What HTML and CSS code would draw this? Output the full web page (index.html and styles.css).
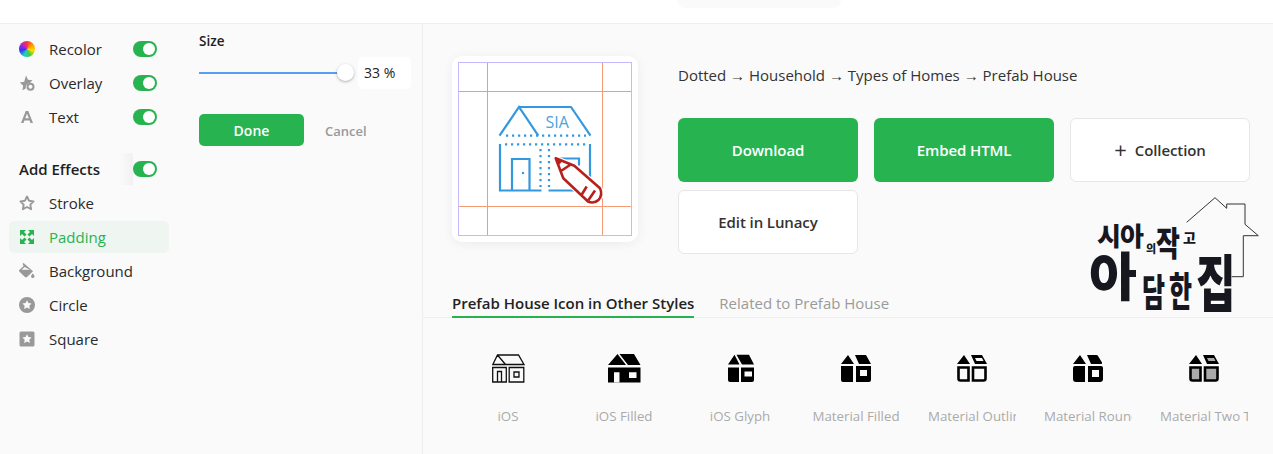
FILE: index.html
```html
<!DOCTYPE html>
<html lang="en">
<head>
<meta charset="utf-8">
<title>Prefab House Icon</title>
<link rel="stylesheet" href="styles.css">
</head>
<body>
<header class="topbar"><div class="pill"></div></header>
<main class="main">
  <aside class="editor">
    <nav class="menu">
      <div class="row"><span class="ico wheel"></span><span class="lbl">Recolor</span><span class="toggle"></span></div>
      <div class="row"><svg class="ico" viewBox="0 0 16 16"><path class="g" d="M7 .5l2 4.200 4.500.6-2.700 2.700a4.500 4.500 0 0 0-4 5.400l-3.400 1.800.8-4.500L.8 7.500l4.400-.7z"/><circle cx="11.500" cy="11.800" r="3" class="ring"/></svg><span class="lbl">Overlay</span><span class="toggle"></span></div>
      <div class="row"><svg class="ico" viewBox="0 0 16 16"><path class="g" d="M6.700 2h2.600L14 14h-2.500l-.9-2.500H5.400L4.500 14H2zM6.200 9.300h3.600L8 4.800z"/></svg><span class="lbl">Text</span><span class="toggle"></span></div>
      <div class="row head-row"><span class="lbl strong">Add Effects</span><span class="toggle fade"></span></div>
      <div class="row"><svg class="ico" viewBox="0 0 16 16"><path class="line" d="M8 1.500l2 4.200 4.600.7-3.300 3.200.8 4.600L8 12l-4.100 2.200.8-4.600L1.400 6.400 6 5.700z"/></svg><span class="lbl">Stroke</span></div>
      <div class="row active"><svg class="ico" viewBox="0 0 16 16"><g class="pad"><path d="M1 1h6L5 3l2.500 2.500-2 2L3 5 1 7z"/><path d="M15 1H9l2 2-2.500 2.500 2 2L13 5l2 2z"/><path d="M1 15H7L5 13l2.500-2.500-2-2L3 11l-2-2z"/><path d="M15 15H9l2-2-2.500-2.500 2-2L13 11l2-2z"/></g></svg><span class="lbl">Padding</span></div>
      <div class="row"><svg class="ico" viewBox="0 0 16 16"><path class="g" d="M3.500.8l1.100-.8 9.400 8.300-6 5.700a1.500 1.500 0 0 1-2 0L.5 8.700a1.400 1.400 0 0 1 0-2L4.600 3zM5.600 4L2.600 6.800h8.400z"/><path class="g" d="M13.800 10.500c1 1.300 1.700 2 1.700 2.900a1.700 1.700 0 0 1-3.400 0c0-.9.700-1.600 1.700-2.900z"/></svg><span class="lbl">Background</span></div>
      <div class="row"><svg class="ico" viewBox="0 0 16 16"><path class="g" fill-rule="evenodd" d="M8 0a8 8 0 1 1 0 16A8 8 0 0 1 8 0zM8 3.200L6.600 6.100l-3.200.4 2.300 2.200-.6 3.200L8 10.400l2.900 1.500-.6-3.200 2.300-2.200-3.200-.4z"/></svg><span class="lbl">Circle</span></div>
      <div class="row"><svg class="ico" viewBox="0 0 16 16"><path class="g" fill-rule="evenodd" d="M2 .5h12A1.500 1.500 0 0 1 15.500 2v12a1.500 1.500 0 0 1-1.500 1.500H2A1.500 1.500 0 0 1 .5 14V2A1.500 1.500 0 0 1 2 .5zM8 3.200L6.600 6.100l-3.200.4 2.300 2.200-.6 3.200L8 10.400l2.900 1.500-.6-3.200 2.300-2.200-3.200-.4z"/></svg><span class="lbl">Square</span></div>
    </nav>
    <section class="size">
      <div class="size-title">Size</div>
      <div class="slider-row">
        <div class="slider"><span class="thumb"></span></div>
        <div class="value">33 %</div>
      </div>
      <div class="actions">
        <button class="done">Done</button>
        <button class="cancel">Cancel</button>
      </div>
    </section>
  </aside>
  <section class="content">
    <div class="hero">
      <div class="card">
        <svg class="preview" viewBox="12 11 186 186">
          <rect class="guide-p" x="18.500" y="17.500" width="173" height="173"/>
          <path class="guide-o" d="M47.500 18v172M162.500 18v172M19 46.500h172M19 161.500h172"/>
          <path class="hs" d="M59.500 90.700L79 62l19.300 28.700M79 62h52l19.500 28.700M60 99v46.500h41.500M150 99v40M108.500 145.500H135M72 145V114h17.500v31M120 113.500h19v7"/>
          <path class="dots" d="M66 90.700h80M65 99.300h84M100.500 104v38M109 104v38"/>
          <circle class="dot" cx="83" cy="128" r="1.200"/>
          <text class="sia" x="105.500" y="83">SIA</text>
          <path class="halo" d="M115.700 113.300L134.300 120.700 160 143.300Q163 150 158.500 155 154 159 148 156.500L123.300 133.300z"/>
          <path class="pen" d="M115.700 113.300L134.300 120.700 160 143.300Q163 150 158.500 155 154 159 148 156.500L123.300 133.300zM146.700 141.500L141.500 150M155 145.500L148.500 155M121.700 125.500L130 120"/>
          <path class="pen-tip" d="M115.700 113.300L122.500 116 118.500 120.500z"/>
        </svg>
      </div>
      <div class="info">
        <div class="crumbs">Dotted → Household → Types of Homes → Prefab House</div>
        <div class="btns">
          <button class="btn green">Download</button>
          <button class="btn green">Embed HTML</button>
          <button class="btn plain"><span class="plus">+</span>Collection</button>
          <button class="btn plain">Edit in Lunacy</button>
        </div>
      </div>
    </div>
    <div class="tabs">
      <span class="tab on">Prefab House Icon in Other Styles</span>
      <span class="tab">Related to Prefab House</span>
    </div>
    <div class="styles">
      <div class="style">
        <svg class="sico" viewBox="0 0 33 29"><path class="o" d="M5.500 1h21l5.500 9.500H.8zM5.500 1l8 9.500M.7 13.500h13.600V28H.7zM5.500 28V17.500h4V28M17.200 13.500h14.600V28H17.200zM22 18h5v5h-5z"/></svg>
        <div class="cap">iOS</div>
      </div>
      <div class="style">
        <svg class="sico" viewBox="0 0 33 29"><path d="M9.500 0l8.500 11H0zM11.500 0H26l6.500 11H20zM0 13.500h32.500V28.500h-32.500z"/><path class="cut" d="M6 18.300h5.500v10.200H6zM21 18.300h7.500v5.700H21z"/></svg>
        <div class="cap">iOS Filled</div>
      </div>
      <div class="style">
        <svg class="sico" viewBox="0 0 33 29"><path d="M10.500.7l5 9.800H4zM12.500.7H25l5 9.800H18zM4 13.500h11V28H6a2 2 0 0 1-2-2zM17 13.500h13V26a2 2 0 0 1-2 2H17z"/><path class="cut" d="M20.500 17.500h7.500v5h-7.500z"/></svg>
        <div class="cap">iOS Glyph</div>
      </div>
      <div class="style">
        <svg class="mico" viewBox="0 0 30 27"><path d="M7 0l6 9H0zM14 0h11l5 9H18zM0 11h12v16H2a2 2 0 0 1-2-2zM15 11h15v14a2 2 0 0 1-2 2H15z"/><path class="cut" d="M19 15h7v6h-7z"/></svg>
        <div class="cap">Material Filled</div>
      </div>
      <div class="style">
        <svg class="mico" viewBox="0 0 30 27"><path d="M7 0l6 9H0zM14 0h11l5 9H18z"/><path class="cut" d="M18 3h7l1.500 3h-7z"/><path class="o2" d="M1.500 12.500h10V25.500H3.500a2 2 0 0 1-2-2zM16 12.500h12.500V23.500a2 2 0 0 1-2 2H16z"/></svg>
        <div class="cap">Material Outline</div>
      </div>
      <div class="style">
        <svg class="mico" viewBox="0 0 30 27"><path d="M7 0l6 9H0zM14 0h9.500a2 2 0 0 1 1.500 1l4 6.500q.5 1.500-1 1.500H18zM2 11h10v16H3a3 3 0 0 1-3-3v-11a2 2 0 0 1 2-2zM15 11h13a2 2 0 0 1 2 2v11a3 3 0 0 1-3 3H15z"/><path class="cut" d="M19 15h7v7h-7z"/></svg>
        <div class="cap">Material Round</div>
      </div>
      <div class="style">
        <svg class="mico" viewBox="0 0 30 27"><path d="M7 0l6 9H0zM14 0h11l5 9H18z"/><path class="grey" d="M18 3h7l1.500 3h-7zM1.500 12.500h10V25.500H3.500a2 2 0 0 1-2-2zM16 12.500h12.500V23.500a2 2 0 0 1-2 2H16z"/><path class="o2" d="M1.500 12.500h10V25.500H3.500a2 2 0 0 1-2-2zM16 12.500h12.500V23.500a2 2 0 0 1-2 2H16z"/></svg>
        <div class="cap">Material Two Tone</div>
      </div>
    </div>
  </section>
</main>
<div class="logo">
  <svg class="logo-house" viewBox="0 0 203 140"><path d="M116.700 37.300L145 12.700l11.700 10.600V19H175v20.300l13.300 11.400h-15v41h-11.600"/></svg>
  <span class="lg w1">시아</span>
  <span class="lg w2">의</span>
  <span class="lg w3">작</span>
  <span class="lg w4">고</span>
  <span class="lg w5">아</span>
  <span class="lg w6">담</span>
  <span class="lg w7">한</span>
  <span class="lg w8">집</span>
</div>
</body>
</html>
```
FILE: styles.css
```css
* { box-sizing: border-box; }
html, body { margin: 0; height: 100%; }
body {
  height: 454px;
  overflow: hidden;
  background: #fff;
  color: #2b2b2b;
  font-family: "Open Sans", "Liberation Sans", sans-serif;
  font-size: 14px;
  position: relative;
}
.topbar { height: 24px; background: #fff; border-bottom: 1px solid #eeeeee; position: relative; }
.pill { width: 164px; height: 8px; margin-left: 677px; background: #fafafa; border-radius: 0 0 9px 9px; }
.main { display: flex; height: 430px; padding-left: 2px; background: #fafafa; }
.editor { width: 421px; flex: none; display: flex; border-right: 1px solid #eeeeee; }
.menu { width: 197px; flex: none; padding: 9px 0 0 7px; display: flex; flex-direction: column; gap: 2px; }
.row { width: 160px; height: 32px; display: flex; align-items: center; padding-left: 10px; border-radius: 5px; position: relative; flex: none; }
.head-row { margin-top: 18px; }
.active { background: #eff5f1; color: #28b351; }
.ico { width: 16px; height: 16px; flex: none; margin-right: 14px; display: block; }
.wheel { border-radius: 50%; background: conic-gradient(#f33, #f90, #fd0, #4c4, #2cc, #33e, #a2d, #f33); }
.g { fill: #999; }
.line { fill: none; stroke: #999; stroke-width: 1.900; stroke-linejoin: round; }
.ring { fill: #fafafa; stroke: #999; stroke-width: 2; }
.pad { fill: #28b351; }
.lbl { font-size: 15px; line-height: 20px; height: 20px; }
.strong { font-weight: 600; color: #1f1f1f; }
.toggle { position: absolute; left: 124px; top: 8px; width: 24px; height: 16px; border-radius: 8px; background: #28b351; }
.toggle::after { content: ""; position: absolute; right: 2px; top: 2px; width: 12px; height: 12px; border-radius: 50%; background: #fff; }
.fade::before { content: ""; position: absolute; left: -13px; top: -8px; width: 13px; height: 32px; background: linear-gradient(to right, #fafafa, #f1f1f1); }
.size { flex: 1; padding-top: 8px; padding-right: 10px; }
.size-title { font-size: 13.500px; font-weight: 600; line-height: 18px; color: #222; }
.slider-row { display: flex; align-items: center; margin-top: 7px; height: 32px; }
.slider { width: 147px; height: 2px; background: #5b9df5; position: relative; margin-right: 12px; }
.thumb { position: absolute; right: -8px; top: -8px; width: 17px; height: 17px; border-radius: 50%; background: #fff; box-shadow: 0 1px 3px rgba(0,0,0,.3); }
.value { width: 53px; height: 32px; background: #fff; border-radius: 5px; padding-left: 6px; line-height: 32px; font-size: 14px; color: #222; }
.actions { display: flex; align-items: center; margin-top: 25px; }
.done { width: 105px; height: 32px; border: 0; padding: 1px 0 0; border-radius: 5px; background: #28b351; color: #fff; font: 600 14px "Open Sans", sans-serif; }
.cancel { border: 0; background: none; padding: 2px 0 0; margin-left: 21px; color: #999; font: 600 13px "Open Sans", sans-serif; }
.content { flex: 1; min-width: 0; }
.hero { display: flex; padding: 32px 0 0 29px; height: 270px; }
.card { width: 186px; height: 186px; border-radius: 10px; background: #fff; box-shadow: 0 2px 12px rgba(0,0,0,.06); flex: none; }
.preview { display: block; width: 186px; height: 186px; }
.guide-p { fill: none; stroke: #c4b9ff; stroke-width: 1; }
.guide-o { fill: none; stroke: #f59a73; stroke-width: 1; }
.hs { fill: none; stroke: #3498df; stroke-width: 2.200; }
.dots { fill: none; stroke: #3498df; stroke-width: 2.200; stroke-dasharray: 2.200 3.800; }
.dot { fill: #3498df; }
.sia { fill: #4ba3e0; font-size: 16px; font-family: "Open Sans", sans-serif; }
.halo { fill: #fff; stroke: #fff; stroke-width: 5; }
.pen { fill: none; stroke: #b8201e; stroke-width: 2.600; stroke-linejoin: round; }
.pen-tip { fill: #b8201e; }
.info { margin-left: 40px; width: 590px; flex: none; }
.crumbs { margin-top: 8px; line-height: 22px; font-size: 15px; font-weight: 500; color: #333; }
.btns { display: flex; flex-wrap: wrap; gap: 8px 16px; margin-top: 32px; }
.btn { height: 64px; width: 180px; border-radius: 6px; font: 600 15px "Open Sans", sans-serif; letter-spacing: -.1px; }
.green { background: #28b351; border: 0; color: #fff; }
.plain { background: #fff; border: 1px solid #e6e6e6; color: #333; }
.plus { font-size: 22px; font-weight: 400; margin-right: 8px; line-height: 14px; vertical-align: -2px; }
.tabs { height: 24px; display: flex; gap: 25px; padding-left: 29px; border-bottom: 1px solid #eeeeee; }
.tab { font-size: 15px; color: #9a9a9a; height: 24px; line-height: 18px; white-space: nowrap; }
.tab.on { color: #222; font-weight: 600; border-bottom: 2px solid #28b351; }
.styles { display: flex; padding: 36px 0 0 27px; }
.style { width: 116px; flex: none; display: flex; flex-direction: column; align-items: center; }
.sico { width: 33px; height: 29px; display: block; fill: #000; }
.mico { width: 30px; height: 27px; margin: 1px 0; display: block; fill: #000; }
.o { fill: none; stroke: #111; stroke-width: 1.300; }
.o2 { fill: none; stroke: #000; stroke-width: 2.600; }
.cut { fill: #fafafa; }
.grey { fill: #aaa; }
.cap { width: 88px; margin-top: 24px; font-size: 13.300px; line-height: 18px; color: #aaa; white-space: nowrap; overflow: hidden; text-align: center; }
.logo { position: absolute; left: 1070px; top: 185px; width: 203px; height: 140px; }
.logo-house { position: absolute; inset: 0; width: 203px; height: 140px; fill: none; }
.logo-house path { fill: none; stroke: #333; stroke-width: 1; }
.lg { position: absolute; font-family: "Noto Sans CJK KR", sans-serif; font-weight: 900; color: #17171f; line-height: 1; white-space: nowrap; transform-origin: top left; }
.w1 { left: 27px; top: 37px; font-size: 26px; letter-spacing: -1px; }
.w2 { left: 76px; top: 58px; font-size: 11px; }
.w3 { left: 86px; top: 40px; font-size: 26px; transform: scaleY(1.300); }
.w4 { left: 113px; top: 45px; font-size: 14px; }
.w5 { left: 19px; top: 63px; font-size: 52px; }
.w6 { left: 72px; top: 86px; font-size: 25px; transform: scaleY(1.500); }
.w7 { left: 99px; top: 84px; font-size: 25px; transform: scaleY(1.600); }
.w8 { left: 126px; top: 64px; font-size: 43px; transform: scaleY(1.450); }
```
